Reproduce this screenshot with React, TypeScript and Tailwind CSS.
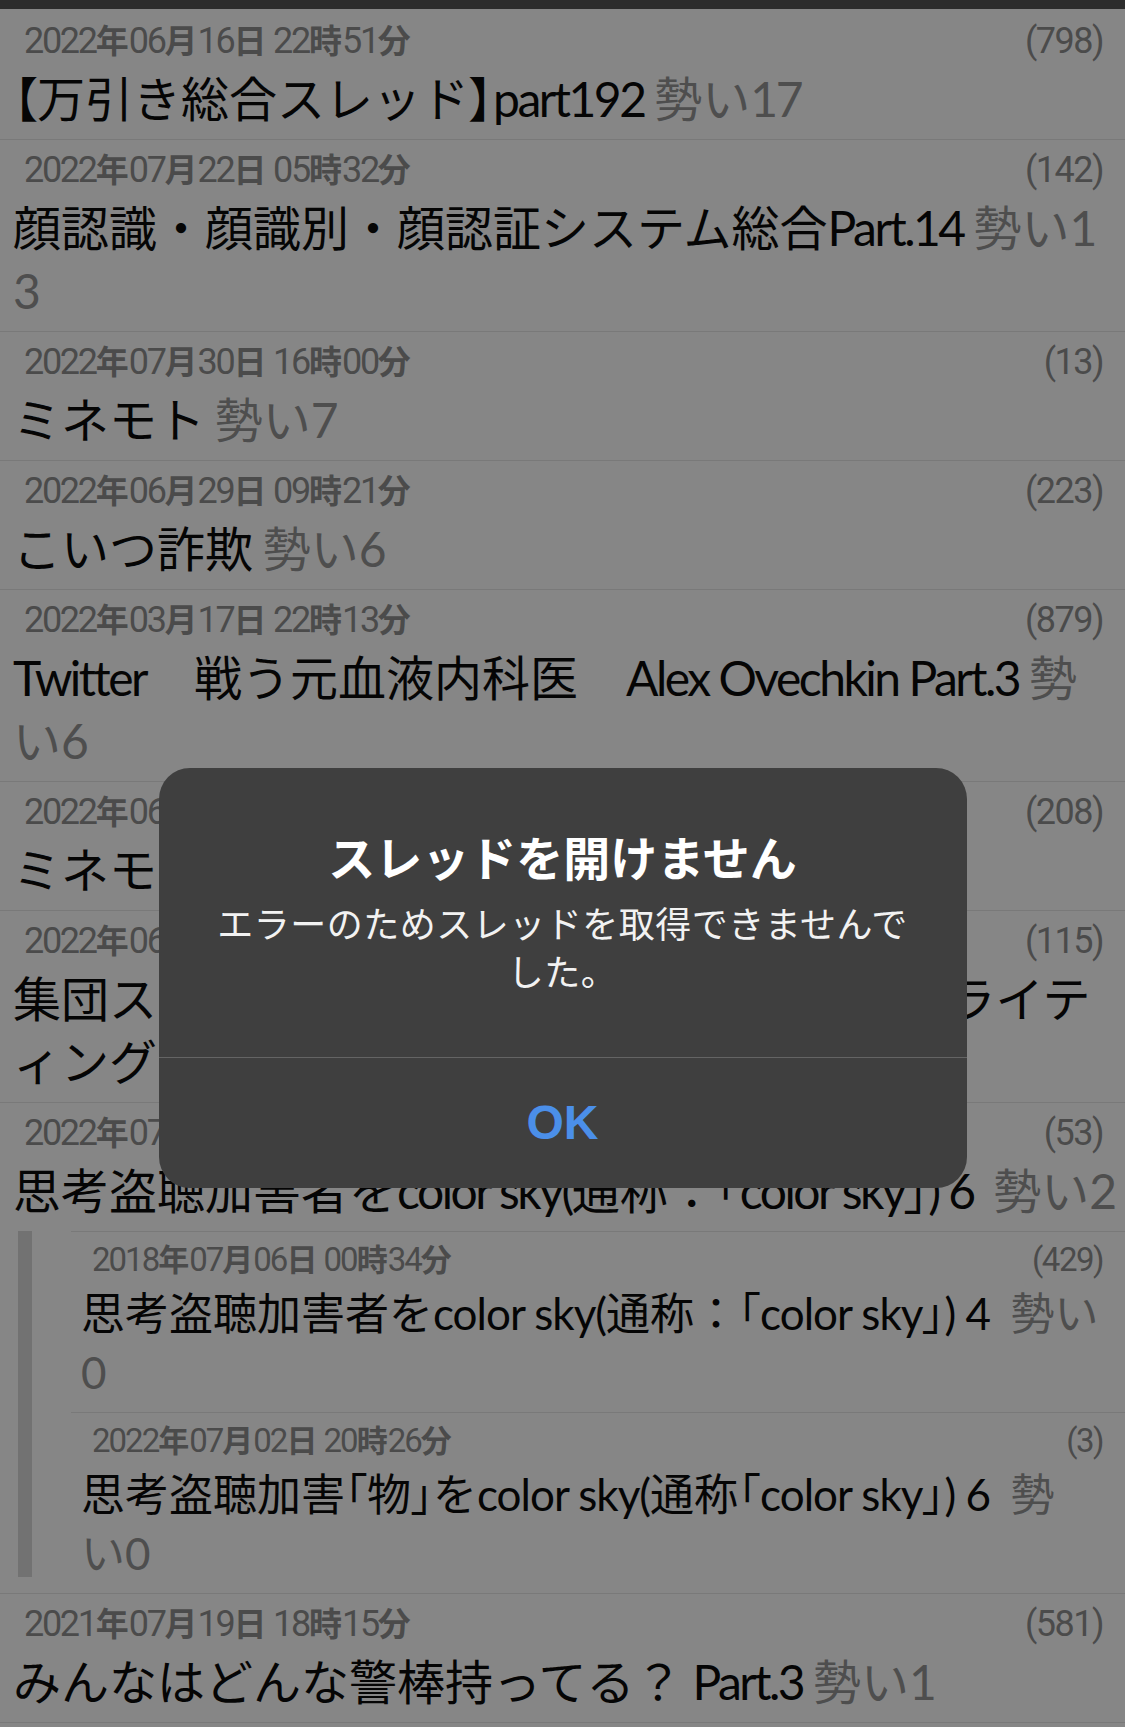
type Line = [string, string];
type Thread = { date: string; count: string; lines: Line[] };

const threads: Thread[] = [
  { date: "2022年06月16日 22時51分", count: "(798)", lines: [["【万引き総合スレッド】part192 ", "勢い17"]] },
  {
    date: "2022年07月22日 05時32分",
    count: "(142)",
    lines: [["顔認識・顔識別・顔認証システム総合Part.14 ", "勢い1"], ["", "3"]],
  },
  { date: "2022年07月30日 16時00分", count: "(13)", lines: [["ミネモト ", "勢い7"]] },
  { date: "2022年06月29日 09時21分", count: "(223)", lines: [["こいつ詐欺 ", "勢い6"]] },
  {
    date: "2022年03月17日 22時13分",
    count: "(879)",
    lines: [["Twitter　戦う元血液内科医　Alex Ovechkin Part.3 ", "勢"], ["", "い6"]],
  },
  { date: "2022年06月13日 19時02分", count: "(208)", lines: [["ミネモト ", "勢い5"]] },
  {
    date: "2022年06月08日 11時47分",
    count: "(115)",
    lines: [["集団ストーカー・テクノロジー犯罪2・ガスライテ", ""], ["ィング ", "勢い4"]],
  },
];

const parent: Thread = {
  date: "2022年07月05日 07時12分",
  count: "(53)",
  lines: [["思考盗聴加害者をcolor sky(通称：「color sky」) 6  ", "勢い2"]],
};

const replies: Thread[] = [
  {
    date: "2018年07月06日 00時34分",
    count: "(429)",
    lines: [["思考盗聴加害者をcolor sky(通称：「color sky」) 4  ", "勢い"], ["", "0"]],
  },
  {
    date: "2022年07月02日 20時26分",
    count: "(3)",
    lines: [["思考盗聴加害「物」をcolor sky(通称「color sky」) 6  ", "勢"], ["", "い0"]],
  },
];

const last: Thread = {
  date: "2021年07月19日 18時15分",
  count: "(581)",
  lines: [["みんなはどんな警棒持ってる？ Part.3 ", "勢い1"]],
};

// latin runs are set tighter, corner brackets get proportional widths
function Runs({ s, small }: { s: string; small?: boolean }) {
  const parts = s.match(/[\x20-\x7e]+|[「」【】]|[^\x20-\x7e「」【】]+/g) || [];
  return (
    <>
      {parts.map((p, i) =>
        /^[\x20-\x7e]+$/.test(p) ? (
          <span key={i} className={small ? "tracking-[-1px]" : "tracking-[-2.5px]"}>
            {p}
          </span>
        ) : /^[「」【】]$/.test(p) ? (
          <span key={i} className="[font-feature-settings:'palt']">
            {p}
          </span>
        ) : (
          <span key={i}>{p}</span>
        )
      )}
    </>
  );
}

function DateText({ s, small }: { s: string; small?: boolean }) {
  const parts = s.match(/[\x20-\x7e]+|[^\x20-\x7e]+/g) || [];
  return (
    <span>
      {parts.map((p, i) =>
        /^[\x20-\x7e]+$/.test(p) ? (
          <span key={i} className={small ? "text-[33px] tracking-[-2px]" : "text-[36px] tracking-[-2.3px]"}>
            {p}
          </span>
        ) : (
          <span key={i} className="font-bold">
            {p}
          </span>
        )
      )}
    </span>
  );
}

function Row({ t, small }: { t: Thread; small?: boolean }) {
  return (
    <div className={small ? "pt-[11px] pb-[10px] pl-[10px] pr-[22px]" : "pt-[12px] pb-[9px] pl-[13px] pr-[22px]"}>
      <div
        className={
          small
            ? "flex justify-between items-center h-[34px] pl-[11px] text-[31px] text-[#4b4b4b] font-['Roboto','Noto_Sans_CJK_JP',sans-serif]"
            : "flex justify-between items-center h-[36px] pl-[11px] text-[33px] text-[#4b4b4b] font-['Roboto','Noto_Sans_CJK_JP',sans-serif]"
        }
      >
        <DateText s={t.date} small={small} />
        <span className={small ? "text-[33px] tracking-[-1.5px]" : "text-[36px] tracking-[-1.5px]"}>{t.count}</span>
      </div>
      <div className={small ? "mt-[7px]" : "mt-[8px]"}>
        {t.lines.map((l, i) => (
          <div
            key={i}
            className={
              small
                ? "whitespace-pre h-[59px] leading-[59px] text-[44px] text-[#050505] font-['Lato','Noto_Sans_CJK_JP',sans-serif]"
                : "whitespace-pre h-[63px] leading-[63px] text-[48px] text-[#050505] font-['Lato','Noto_Sans_CJK_JP',sans-serif]"
            }
          >
            <Runs s={l[0]} small={small} />
            <span className="text-[#4e4e4e]">
              <Runs s={l[1]} small={small} />
            </span>
          </div>
        ))}
      </div>
    </div>
  );
}

export default function App() {
  return (
    <div className="relative w-full min-h-screen bg-[#868686] overflow-hidden">
      <div className="h-[9px] bg-[#2c2c2c]" />
      <div className="pt-[2px]">
        {threads.map((t, i) => (
          <div key={i} className="border-b border-[#797979]">
            <Row t={t} />
          </div>
        ))}
        <Row t={parent} />
        <div className="flex border-b border-[#797979]">
          <div className="w-[71px] shrink-0 pl-[18px] pb-[16px] flex">
            <div className="w-[14px] bg-[#727272]" />
          </div>
          <div className="flex-1 min-w-0 overflow-hidden">
            {replies.map((t, i) => (
              <div key={i} className="border-t border-[#797979]">
                <Row t={t} small />
              </div>
            ))}
          </div>
        </div>
        <div className="border-b border-[#797979]">
          <Row t={last} />
        </div>
      </div>

      <div className="absolute top-[768px] left-1/2 -translate-x-1/2 w-[808px] rounded-[31px] bg-[#3f3f3f] text-center font-['Noto_Sans_CJK_JP',sans-serif]">
        <div className="pt-[58px] pb-[63px] px-[40px]">
          <div className="h-[60px] leading-[60px] text-[47px] font-bold text-white">スレッドを開けません</div>
          <div className="mt-[12px] text-[36px] leading-[48px] tracking-[0.5px] text-[#f2f2f2]">
            エラーのためスレッドを取得できませんで
            <br />
            した。
          </div>
        </div>
        <div className="h-[131px] border-t border-[#646464] flex items-center justify-center">
          <span className="text-[48px] font-bold text-[#4b8fe9] font-['Liberation_Sans',sans-serif]">OK</span>
        </div>
      </div>
    </div>
  );
}
